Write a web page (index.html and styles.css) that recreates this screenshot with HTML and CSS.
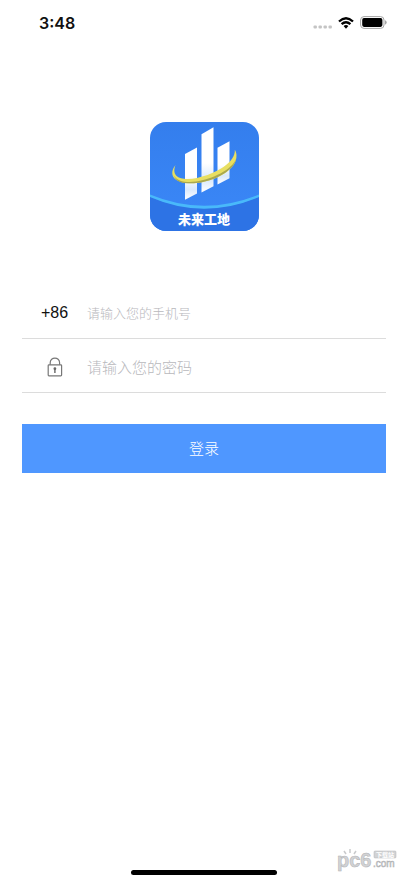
FILE: index.html
```html
<!DOCTYPE html>
<html lang="zh-CN">
<head>
<meta charset="utf-8">
<meta name="viewport" content="width=device-width, initial-scale=1">
<title>登录</title>
<link rel="stylesheet" href="styles.css">
</head>
<body>
<header class="status">
  <span class="time">3:48</span>
  <div class="indicators">
    <svg width="20" height="4" viewBox="0 0 20 4" fill="#c4c4c4" aria-hidden="true"><rect x="0.5" y="0.5" width="3.4" height="3" rx="1"/><rect x="5.5" y="0.5" width="3.4" height="3" rx="1"/><rect x="10.5" y="0.5" width="3.4" height="3" rx="1"/><rect x="15.5" y="0.5" width="3.4" height="3" rx="1"/></svg>
    <svg class="wifi" width="16" height="12" viewBox="0 0 16 12" fill="none" stroke="#000" stroke-width="2.3" aria-hidden="true"><path d="M1 4.5Q8-2 15 4.5M3.6 7.2Q8 3.2 12.4 7.2"/><path d="M5.6 9.1Q8 7.1 10.4 9.1L8 11.7Z" fill="#000" stroke="none"/></svg>
    <svg width="27" height="13" viewBox="0 0 27 13" aria-hidden="true"><rect x="0.6" y="0.6" width="23.4" height="11.8" rx="3.4" fill="#fff" stroke="#a5a5a5"/><rect x="2.2" y="2.1" width="20.2" height="8.8" rx="1.8"/><path d="M25 4.3q1.7.6 1.7 2.2T25 8.7z" fill="#a5a5a5"/></svg>
  </div>
</header>
<main class="login">
  <svg class="logo" viewBox="0 0 109 109" role="img" aria-label="未来工地">
    <defs>
      <linearGradient id="sky" x1="0" y1="0" x2="0" y2="1"><stop offset="0" stop-color="#347eed"/><stop offset="1" stop-color="#3b88f8"/></linearGradient>
      <linearGradient id="bar" x1="0" y1="0" x2="0" y2="1"><stop offset="0.55" stop-color="#fff"/><stop offset="0.8" stop-color="#d9e9fc"/><stop offset="1" stop-color="#fff"/></linearGradient>
      <clipPath id="tile"><rect width="109" height="109" rx="16"/></clipPath>
    </defs>
    <g clip-path="url(#tile)">
      <rect width="109" height="109" fill="url(#sky)"/>
      <path d="M0 75Q54 97 109 75V109H0Z" fill="#2d73e5"/>
      <path d="M0 72.500Q54 95 109 72.500V75Q54 98.500 0 75Z" fill="#49b9fa"/>
    </g>
    <g fill="url(#bar)">
      <path d="M35 32L47 25.500V71.500L35 77.800Z"/>
      <path d="M51.500 12.300L63.500 5.300V64.300L51.500 70.500Z"/>
      <path d="M67.500 25.800L79.500 19.300V56.300L67.500 62.500Z"/>
    </g>
    <path d="M25.500 43C18.500 52 23 60.500 39 61.300C60 61.800 85 50 86.400 35.500C86.800 32 86 29.500 84.800 27.800C86 40 66 52 47 56C32 59 20.500 55.500 25.500 43Z" fill="#e8df61"/>
    <path d="M23.500 53C26 60 32 61.300 39 61.300C60 61.800 84 50 86.200 36.500C82 48 62 57 46 59.600C36 60.900 27 59.500 23.500 53Z" fill="#a9a84f"/>
    <text class="logo-name" x="54" y="102" text-anchor="middle">未来工地</text>
  </svg>
  <form class="form">
    <div class="field">
      <label class="lead" for="phone">+86</label>
      <input class="input phone" id="phone" type="tel" placeholder="请输入您的手机号">
    </div>
    <div class="field">
      <label class="lead" for="password" aria-label="密码">
        <svg width="16" height="20" viewBox="0 0 16 20" fill="none" stroke="#777" stroke-width="1.2"><rect x="1.200" y="7.800" width="13.400" height="11" rx="0.800"/><path d="M3.200 7.800V5.700C3.200-.500 12.600-.500 12.600 5.700V7.800"/><circle cx="7.900" cy="11.700" r="1.400" fill="#666" stroke="none"/><path d="M7.900 12V16" stroke="#666" stroke-width="1.400"/></svg>
      </label>
      <input class="input" id="password" type="password" placeholder="请输入您的密码">
    </div>
    <button class="submit" type="button">登录</button>
  </form>
</main>
<footer class="bottom">
  <div class="home"></div>
  <svg class="mark" width="62" height="26" viewBox="0 0 62 26" role="img" aria-label="pc6.com">
    <g fill="#d2d3d5" stroke="#b0b1b4" stroke-width="0.500">
      <text class="mark-main" x="0" y="19">pc6</text>
      <text class="mark-com" x="36" y="19">.com</text>
      <rect x="37" y="3" width="22" height="7" rx="1"/>
    </g>
    <path d="M9 6L7 3M13 5V1M17 6L19 3" stroke="#c9cacc" stroke-width="1.500"/>
    <text class="mark-tag" x="48" y="9" text-anchor="middle" fill="#fff">下载站</text>
  </svg>
</footer>
</body>
</html>
```
FILE: styles.css
```css
* {
  box-sizing: border-box;
}

body {
  margin: 0;
  min-height: 100vh;
  display: flex;
  flex-direction: column;
  background: #fff;
  color: #111;
  font-family: Inter, "Noto Sans CJK SC", sans-serif;
}

.status {
  display: flex;
  align-items: center;
  justify-content: space-between;
  height: 45px;
  padding: 0 21px 0 39px;
}

.time {
  font-size: 16px;
  font-weight: 600;
}

.indicators {
  display: flex;
  align-items: center;
  gap: 5px;
}

.indicators svg:first-child {
  margin-top: 8px;
}

.wifi {
  margin-right: 1px;
}

.login {
  flex: 1;
  display: flex;
  flex-direction: column;
  align-items: center;
  padding: 77px 22px 0;
}

.logo {
  width: 109px;
  height: 109px;
}

.logo-name {
  font: 900 13px "Noto Sans CJK SC", sans-serif;
  fill: #fff;
}

.form {
  width: 100%;
  margin-top: 54px;
}

.field {
  display: flex;
  align-items: center;
  height: 54px;
  padding-top: 2px;
  border-bottom: 1px solid #dcdcdc;
}

.lead {
  flex: 0 0 65px;
  display: flex;
  justify-content: center;
  font: 16px "Liberation Sans", sans-serif;
}

.input {
  flex: 1;
  min-width: 0;
  padding: 0;
  border: 0;
  outline: 0;
  background: none;
  font: 300 15px "Noto Sans CJK SC", sans-serif;
}

.phone {
  font-size: 13px;
}

.input::placeholder {
  color: #b8b8bc;
  opacity: 1;
}

.submit {
  width: 100%;
  height: 49px;
  margin-top: 31px;
  padding: 0 0 2px;
  border: 0;
  background: #4f97ff;
  color: #fff;
  font: 300 15px "Noto Sans CJK SC", sans-serif;
}

.bottom {
  position: relative;
  display: flex;
  justify-content: center;
  padding-bottom: 8px;
}

.home {
  width: 36%;
  height: 5px;
  border-radius: 3px;
  background: #000;
}

.mark {
  position: absolute;
  right: 9px;
  bottom: 9px;
}

.mark-main {
  font: 700 20px "Liberation Sans", sans-serif;
}

.mark-com {
  font: 400 10px "Liberation Sans", sans-serif;
}

.mark-tag {
  font: 700 6px "Noto Sans CJK SC", sans-serif;
}
```
